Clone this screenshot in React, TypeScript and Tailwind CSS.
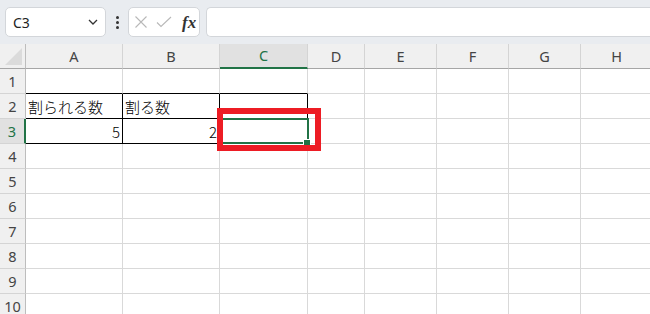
import React from "react";

const COLS = ["A", "B", "C", "D", "E", "F", "G", "H"];
const COL_W = ["w-[97px]", "w-[97px]", "w-[88px]", "w-[57px]", "w-[72px]", "w-[72px]", "w-[72px]", "w-[72px]"];

const uiFont = { fontFamily: '"Noto Sans", "Open Sans", sans-serif' };
const cellFont = { fontFamily: '"Noto Sans CJK JP", "Noto Sans", sans-serif' };

function cellContent(r: number, c: number) {
  if (r === 2 && c === 0) return { text: "割られる数", align: "left" };
  if (r === 2 && c === 1) return { text: "割る数", align: "left" };
  if (r === 3 && c === 0) return { text: "5", align: "right" };
  if (r === 3 && c === 1) return { text: "2", align: "right" };
  return null;
}

function Cell({ r, c }: { r: number; c: number }) {
  const inTable = (r === 2 || r === 3) && c <= 2;
  const aboveTable = r === 1 && c <= 2;
  const rightBlack = inTable;
  const bottomBlack = inTable || aboveTable;
  const content = cellContent(r, c);
  return (
    <div
      className={`h-[25px] shrink-0 box-border border-r border-b flex items-end overflow-hidden ${COL_W[c]} ${
        rightBlack ? "border-r-black" : "border-r-[#d9d9d9]"
      } ${bottomBlack ? "border-b-black" : "border-b-[#d9d9d9]"} ${
        content?.align === "right" ? "justify-end pr-[2px]" : "justify-start pl-[2px]"
      }`}
    >
      {content && (
        <span className="text-[15px] leading-[22px] font-light text-black" style={cellFont}>
          {content.text}
        </span>
      )}
    </div>
  );
}

export default function App() {
  return (
    <div className="w-[650px] h-[314px] overflow-hidden bg-white relative">
      {/* Toolbar */}
      <div className="h-[44px] bg-[#e9ecf0] flex items-center pl-[5px] gap-0">
        <div className="w-[101px] h-[30px] bg-white border border-[#d3d6da] rounded-[5px] flex items-center justify-between pl-[7px] pr-[5px]">
          <span className="text-[14px] text-[#222]" style={uiFont}>C3</span>
          <svg width="14" height="14" viewBox="0 0 14 14">
            <path d="M3 5 L7 9 L11 5" fill="none" stroke="#333" strokeWidth="1.3" />
          </svg>
        </div>
        <div className="w-[22px] h-[30px] flex flex-col items-center justify-center gap-[2px]">
          <div className="w-[3px] h-[3px] bg-[#333] rounded-full" />
          <div className="w-[3px] h-[3px] bg-[#333] rounded-full" />
          <div className="w-[3px] h-[3px] bg-[#333] rounded-full" />
        </div>
        <div className="w-[72px] h-[30px] bg-white border border-[#d3d6da] rounded-[5px] flex items-center pl-[5px] gap-[8px]">
          <svg width="14" height="14" viewBox="0 0 14 14">
            <path d="M1.5 1.5 L12.5 12.5 M12.5 1.5 L1.5 12.5" stroke="#b8b8b8" strokeWidth="1.1" />
          </svg>
          <svg width="16" height="14" viewBox="0 0 16 14">
            <path d="M1 7.5 L5 11.5 L15 2" fill="none" stroke="#b8b8b8" strokeWidth="1.1" />
          </svg>
          <span className="text-[17px] italic font-bold text-[#333] leading-none ml-[2px]" style={{ fontFamily: '"Liberation Serif", serif' }}>
            fx
          </span>
        </div>
        <div className="ml-[6px] flex-1 h-[30px] bg-white border border-[#d3d6da] rounded-l-[5px] border-r-0" />
      </div>

      {/* Sheet */}
      <div className="relative">
        {/* Header row */}
        <div className="flex h-[25px]">
          <div className="w-[26px] h-[25px] shrink-0 box-border bg-[#f0f0f0] border-r border-b border-r-[#bdbdbd] border-b-[#a6a6a6] relative">
            <svg width="18" height="18" viewBox="0 0 18 18" className="absolute left-[5px] top-[4px]">
              <path d="M17 0 L17 17 L0 17 Z" fill="#dbdbdb" />
            </svg>
          </div>
          {COLS.map((col, i) => {
            const sel = col === "C";
            return (
              <div
                key={col}
                className={`h-[25px] shrink-0 box-border border-r border-r-[#d4d4d4] flex items-center justify-center ${COL_W[i]} ${
                  sel ? "bg-[#e1e1e1] border-b-2 border-b-[#217346] text-[#217346]" : "bg-[#f0f0f0] border-b border-b-[#a6a6a6] text-[#444]"
                }`}
              >
                <span className="text-[14.5px] pt-[1px]" style={uiFont}>{col}</span>
              </div>
            );
          })}
        </div>
        {/* Rows */}
        {Array.from({ length: 10 }, (_, ri) => {
          const r = ri + 1;
          const sel = r === 3;
          return (
            <div key={r} className="flex h-[25px]">
              <div
                className={`w-[26px] h-[25px] shrink-0 box-border border-b border-b-[#d4d4d4] flex items-center justify-center ${
                  sel ? "bg-[#e1e1e1] border-r-2 border-r-[#217346] text-[#217346]" : "bg-[#f0f0f0] border-r border-r-[#bdbdbd] text-[#444]"
                }`}
              >
                <span className="text-[14.5px] pt-[1px]" style={uiFont}>{r}</span>
              </div>
              {COLS.map((_c, ci) => (
                <Cell key={ci} r={r} c={ci} />
              ))}
            </div>
          );
        })}

        {/* Selection overlay on C3 */}
        <div className="absolute left-[219px] top-[74px] w-[90px] h-[26px] border-2 border-[#217346] pointer-events-none" />
        <div className="absolute left-[304px] top-[96px] w-[6px] h-[6px] bg-[#217346] outline outline-1 outline-white pointer-events-none" />
        {/* Red highlight box */}
        <div className="absolute left-[217px] top-[64px] w-[104px] h-[43px] border-[6px] border-[#ed1c24] pointer-events-none" />
      </div>
    </div>
  );
}
